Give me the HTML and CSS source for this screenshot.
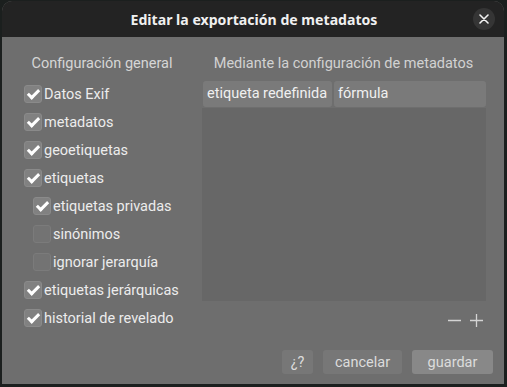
FILE: index.html
```html
<!DOCTYPE html>
<html lang="es">
<head>
    <meta charset="UTF-8">
    <title>Editar la exportación de metadatos</title>
    <link rel="stylesheet" href="styles.css">
</head>
<body>
    <div class="dialog">
        <div class="dialog-header">
            <h1 class="dialog-title">Editar la exportación de metadatos</h1>
            <button class="close-btn" aria-label="cerrar">
                <svg width="10" height="10" viewBox="0 0 10 10">
                    <path d="M1 1 L9 9 M9 1 L1 9" stroke="#f2f2f2" stroke-width="1.6" stroke-linecap="round"/>
                </svg>
            </button>
        </div>

        <div class="dialog-body">
            <div class="columns">
                <div class="general">
                    <div class="section-title">Configuración general</div>
                    <label class="check-row"><span class="box checked"></span>Datos Exif</label>
                    <label class="check-row"><span class="box checked"></span>metadatos</label>
                    <label class="check-row"><span class="box checked"></span>geoetiquetas</label>
                    <label class="check-row"><span class="box checked"></span>etiquetas</label>
                    <label class="check-row sub"><span class="box checked"></span>etiquetas privadas</label>
                    <label class="check-row sub"><span class="box"></span>sinónimos</label>
                    <label class="check-row sub"><span class="box"></span>ignorar jerarquía</label>
                    <label class="check-row"><span class="box checked"></span>etiquetas jerárquicas</label>
                    <label class="check-row"><span class="box checked"></span>historial de revelado</label>
                </div>

                <div class="formulas">
                    <div class="section-title">Mediante la configuración de metadatos</div>
                    <div class="table">
                        <div class="table-head">
                            <div class="th th-tag">etiqueta redefinida</div>
                            <div class="th th-formula">fórmula</div>
                        </div>
                        <div class="table-rows"></div>
                    </div>
                    <div class="table-tools">
                        <svg class="tool" width="13" height="13" viewBox="0 0 13 13">
                            <path d="M0 6.5 H13" stroke="#d4d4d4" stroke-width="1.3"/>
                        </svg>
                        <svg class="tool" width="13" height="13" viewBox="0 0 13 13">
                            <path d="M0 6.5 H13 M6.5 0 V13" stroke="#d4d4d4" stroke-width="1.3"/>
                        </svg>
                    </div>
                </div>
            </div>

            <div class="dialog-actions">
                <button class="dlg-button help-btn">¿?</button>
                <button class="dlg-button cancel-btn">cancelar</button>
                <button class="dlg-button save-btn">guardar</button>
            </div>
        </div>
    </div>
</body>
</html>
```

FILE: styles.css
```css
body {
    margin: 0;
    padding: 0;
    background-color: #1b1f1e;
    font-family: 'Roboto', sans-serif;
    color: #e4e4e4;
}

.dialog {
    width: 502px;
    height: 383px;
    margin: 1px 0 0 2px;
    background-color: #6e6e6e;
    border-radius: 10px 10px 0 0;
    overflow: hidden;
    display: flex;
    flex-direction: column;
}

.dialog-header {
    height: 36px;
    background-color: #232323;
    display: flex;
    align-items: center;
    justify-content: center;
    position: relative;
}

.dialog-title {
    margin: 0;
    font-family: 'Noto Sans', sans-serif;
    font-size: 14.1px;
    font-weight: bold;
    color: #f0f0f0;
    padding-left: 2px;
}

.close-btn {
    position: absolute;
    right: 9px;
    top: 7px;
    width: 22px;
    height: 22px;
    border-radius: 50%;
    border: none;
    padding: 0;
    background-color: #353535;
    display: flex;
    align-items: center;
    justify-content: center;
}

.dialog-body {
    flex: 1;
    display: flex;
    flex-direction: column;
    padding: 18px 11px 10px 20px;
}

.columns {
    display: flex;
    gap: 19px;
}

.general {
    width: 160px;
}

.section-title {
    font-size: 14.5px;
    color: #d6d6d6;
    text-align: center;
    white-space: nowrap;
    height: 18px;
    line-height: 18px;
    margin-bottom: 7px;
}

.check-row {
    display: flex;
    align-items: center;
    height: 28px;
    font-size: 14.5px;
    color: #ececec;
    white-space: nowrap;
}

.check-row.sub {
    padding-left: 9px;
}

.box {
    width: 16px;
    height: 16px;
    margin: 0 2px 0 2px;
    border: 1px solid #7b7b7b;
    border-radius: 3px;
    background-color: #737373;
    position: relative;
}

.box.checked {
    background-color: #818181;
    border-color: #8a8a8a;
}

.box.checked::after {
    content: "";
    position: absolute;
    left: 5px;
    top: 1px;
    width: 4px;
    height: 9px;
    border: solid #ffffff;
    border-width: 0 3px 3px 0;
    transform: rotate(45deg);
}

.formulas {
    width: 285px;
    display: flex;
    flex-direction: column;
}

.formulas .section-title {
    color: #d2d2d2;
    margin-bottom: 8px;
}

.table {
    height: 220px;
    margin-left: 1px;
    display: flex;
    flex-direction: column;
}

.table-head {
    display: flex;
    gap: 2px;
    height: 26px;
    margin-bottom: 1px;
    padding-left: 1px;
}

.th {
    background-color: #7a7a7a;
    border-radius: 3px;
    font-size: 14.5px;
    color: #f0f0f0;
    line-height: 26px;
    padding-left: 4px;
}

.th-tag {
    width: 125px;
}

.th-formula {
    flex: 1;
}

.table-rows {
    flex: 1;
    background-color: #676767;
}

.table-tools {
    display: flex;
    justify-content: flex-end;
    gap: 9px;
    padding-right: 3px;
    margin-top: 13px;
}

.dialog-actions {
    margin-top: auto;
    display: flex;
    justify-content: flex-end;
    gap: 10px;
}

.dlg-button {
    height: 24px;
    padding: 0;
    border: none;
    border-radius: 3px;
    background-color: #777777;
    font-family: 'Roboto', sans-serif;
    font-size: 14.5px;
    color: #dcdcdc;
}

.help-btn {
    width: 31px;
}

.cancel-btn {
    width: 79px;
}

.save-btn {
    width: 81px;
    background-color: #888888;
}
```
